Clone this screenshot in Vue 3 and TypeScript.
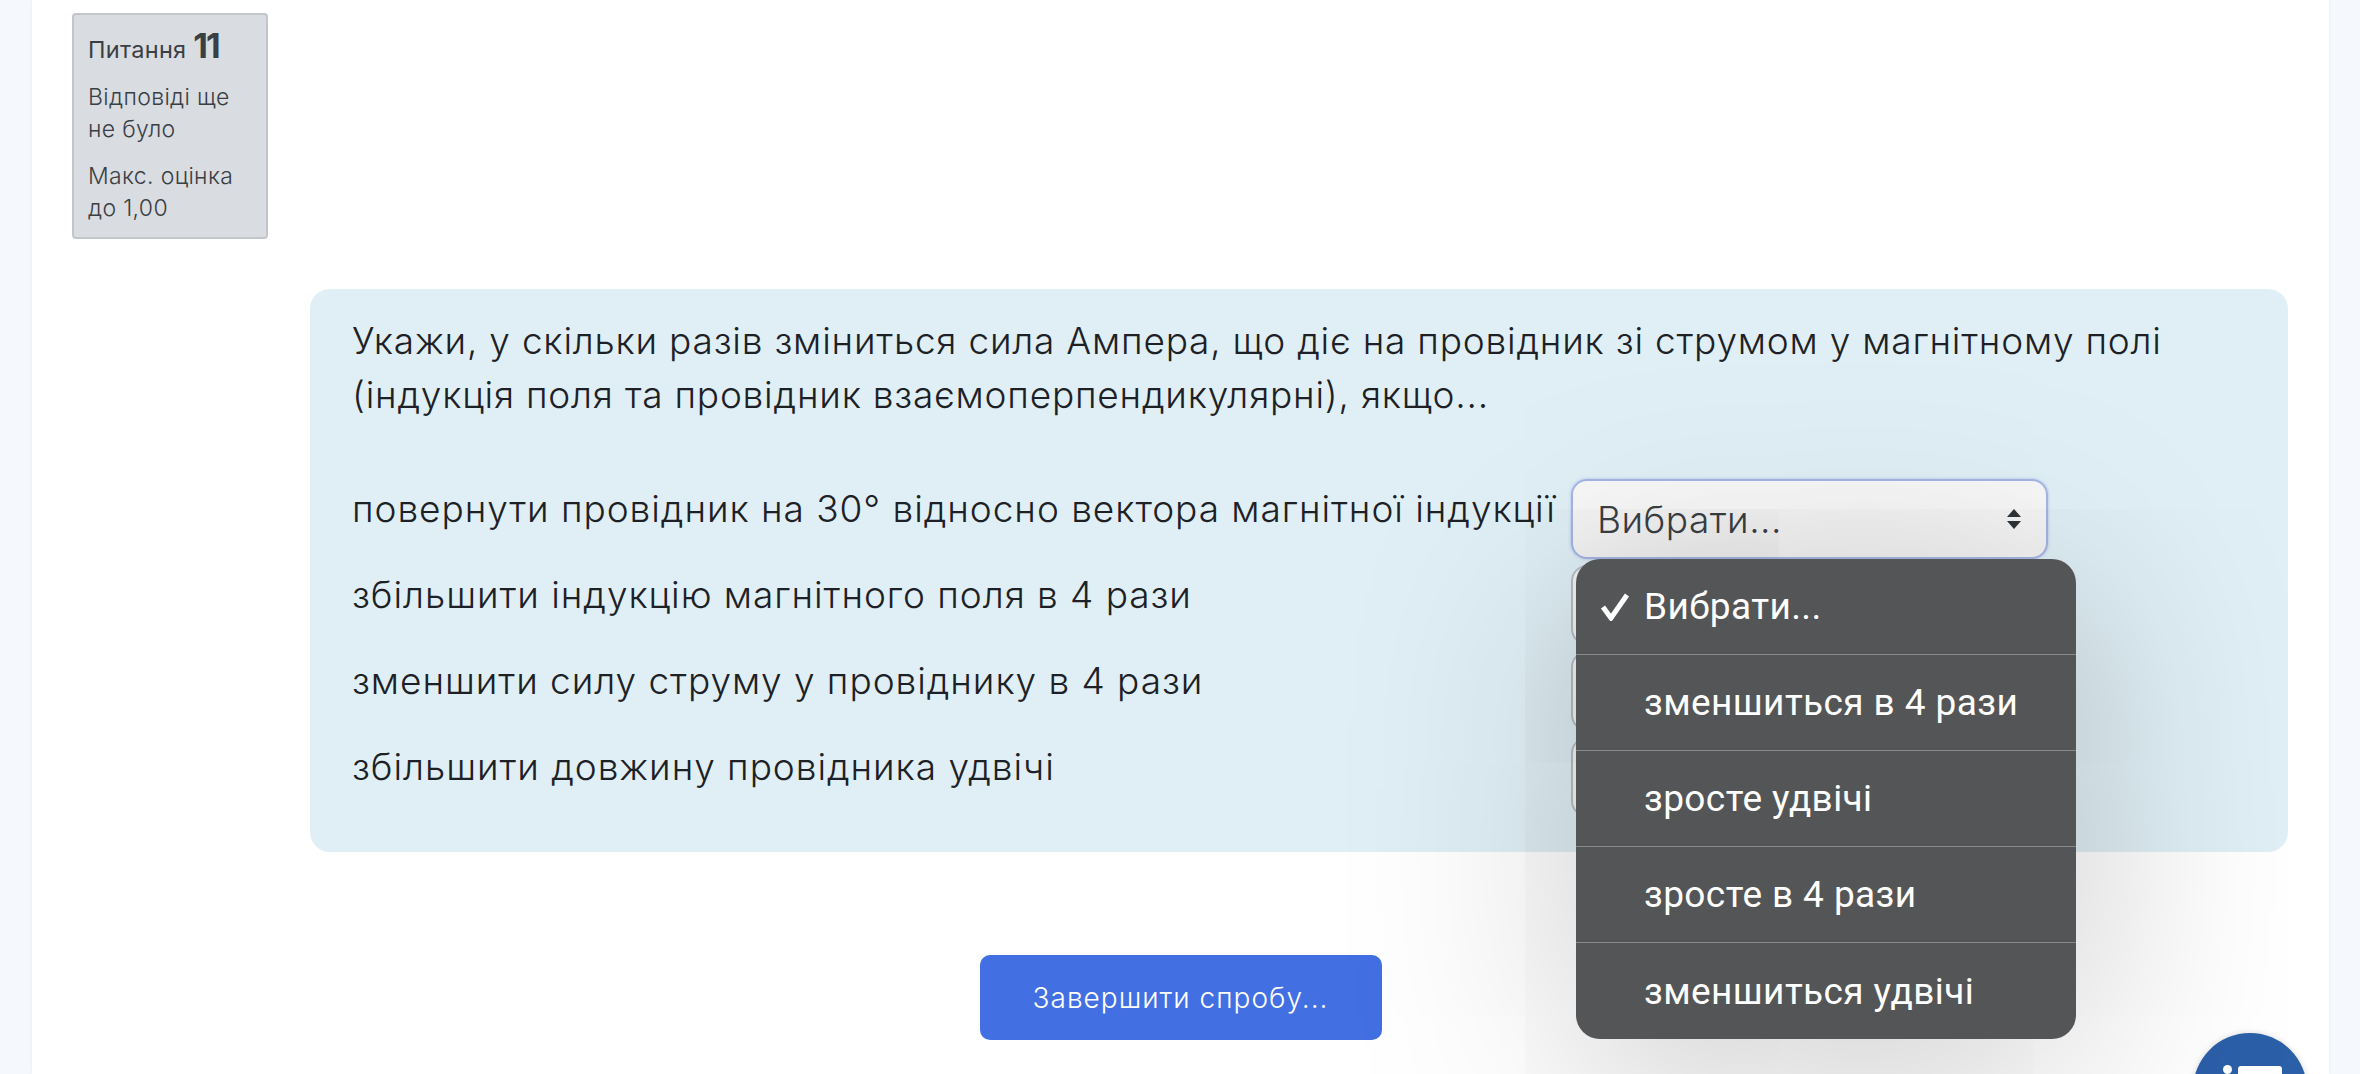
<template>
  <div class="page">
    <main class="sheet">
      <aside class="info">
        <h3 class="info-title">Питання <span class="qno">11</span></h3>
        <p class="info-line">Відповіді ще не було</p>
        <p class="info-line">Макс. оцінка до 1,00</p>
      </aside>

      <section class="question">
        <p class="prompt">
          Укажи, у скільки разів зміниться сила Ампера, що діє на провідник зі струмом у магнітному полі
          (індукція поля та провідник взаємоперпендикулярні), якщо...
        </p>
        <div class="answers">
          <template v-for="(row, i) in rows" :key="row">
            <div class="answer-text">{{ row }}</div>
            <div class="select-cell">
              <div :class="['fake-select', { focused: i === 0 }]">
                <!-- the lower selects are covered by the popup, only their edge shows -->
                <template v-if="i === 0">
                  <span>Вибрати...</span>
                  <svg class="arrows" width="16" height="20" viewBox="0 0 16 20">
                    <path d="M8 0 L15 8 H1 Z M1 12 H15 L8 20 Z" fill="#2f3236" />
                  </svg>
                </template>
              </div>
              <ul v-if="i === 0" class="popup">
                <li v-for="opt in options" :key="opt" class="popup-item">
                  <svg v-if="opt === options[0]" class="check" width="30" height="28" viewBox="0 0 30 28">
                    <path d="M3 14 L11 25 L27 2" fill="none" stroke="#fff" stroke-width="5" />
                  </svg>
                  {{ opt }}
                </li>
              </ul>
            </div>
          </template>
        </div>
      </section>

      <div class="actions">
        <button class="finish">Завершити спробу...</button>
      </div>
    </main>

    <div class="fab">
      <span class="fab-dot"></span>
      <span class="fab-bar"></span>
    </div>
  </div>
</template>

<script setup lang="ts">
const rows: string[] = [
  "повернути провідник на 30° відносно вектора магнітної індукції",
  "збільшити індукцію магнітного поля в 4 рази",
  "зменшити силу струму у провіднику в 4 рази",
  "збільшити довжину провідника удвічі",
];

const options: string[] = [
  "Вибрати...",
  "зменшиться в 4 рази",
  "зросте удвічі",
  "зросте в 4 рази",
  "зменшиться удвічі",
];
</script>

<style>
html,
body {
  margin: 0;
  overflow: hidden;
}
</style>

<style scoped>
.page {
  position: relative;
  height: 1074px;
  overflow: hidden;
  background: #f5f9fe;
  font-family: Inter, "Noto Sans", sans-serif;
  color: #1d2125;
}
.sheet {
  margin: 0 31px 0 32px;
  height: 1074px;
  box-sizing: border-box;
  padding: 13px 40px 0;
  background: #fff;
  box-shadow: 0 0 4px rgba(0, 0, 0, 0.06);
}
.info {
  box-sizing: border-box;
  width: 196px;
  height: 226px;
  padding: 11px 14px;
  background: #d9dce1;
  border: 2px solid #c2c5ca;
  border-radius: 4px;
  color: #3a3f44;
}
.info-title {
  margin: 0 0 11px;
  font-size: 23.5px;
  font-weight: 400;
  line-height: 40px;
  letter-spacing: 0.3px;
  white-space: nowrap;
}
.qno {
  font-size: 34px;
  font-weight: 700;
  letter-spacing: -2px;
}
.info-line {
  margin: 0 0 15px;
  font-size: 23px;
  font-weight: 300;
  line-height: 32px;
  letter-spacing: 0.35px;
}
.question {
  box-sizing: border-box;
  margin: 50px 0 0 238px;
  width: 1978px;
  height: 563px;
  padding: 25px 42px 0;
  background: #e0eff6;
  border-radius: 20px;
}
.prompt {
  margin: 0;
  width: 1840px;
  font-size: 37px;
  font-weight: 300;
  line-height: 54px;
  letter-spacing: 0.78px;
}
.answers {
  display: grid;
  grid-template-columns: 1205px 477px;
  column-gap: 14px;
  row-gap: 6px;
  margin-top: 57px;
}
.answer-text {
  padding-top: 3px;
  font-size: 37px;
  font-weight: 300;
  line-height: 54px;
  letter-spacing: 0.95px;
  white-space: nowrap;
}
.select-cell {
  position: relative;
}
.fake-select {
  box-sizing: border-box;
  display: flex;
  align-items: center;
  justify-content: space-between;
  height: 80px;
  padding: 0 24px 0 24px;
  background: #f4f4f4;
  border: 2px solid #b9bdc2;
  border-radius: 16px;
  font-size: 37px;
  font-weight: 300;
  letter-spacing: 0.5px;
  color: #3a3f44;
}
.fake-select.focused {
  background: linear-gradient(#f7f7f7, #f3f3f3);
  border-color: #a5b4e4;
  box-shadow: 0 0 3px rgba(110, 135, 220, 0.5);
}
.arrows {
  flex: none;
}
.popup {
  position: absolute;
  z-index: 5;
  top: 80px;
  left: 5px;
  width: 500px;
  margin: 0;
  padding: 0;
  list-style: none;
  background: #545556;
  border-radius: 24px;
  box-shadow: 0 30px 220px rgba(0, 0, 0, 0.25);
  color: #fff;
  font-family: Roboto, "Noto Sans", sans-serif;
  font-size: 37px;
  letter-spacing: 0.4px;
}
.popup-item {
  position: relative;
  box-sizing: border-box;
  display: flex;
  align-items: center;
  height: 96px;
  padding-left: 68px;
  border-bottom: 1px solid #8a8a8a;
}
.popup-item:last-child {
  border-bottom: 0;
}
.check {
  position: absolute;
  left: 24px;
  top: 34px;
}
.actions {
  display: flex;
  justify-content: center;
  margin-top: 103px;
}
.finish {
  width: 402px;
  height: 85px;
  border: 0;
  border-radius: 10px;
  background: #4270e3;
  color: #fff;
  font-family: Inter, "Noto Sans", sans-serif;
  font-size: 28px;
  font-weight: 300;
  letter-spacing: 1px;
}
.fab {
  position: absolute;
  left: 2193px;
  top: 1033px;
  width: 114px;
  height: 114px;
  border-radius: 50%;
  background: #2b5fa8;
  box-shadow: 0 0 6px rgba(0, 0, 0, 0.15);
}
.fab-dot {
  position: absolute;
  left: 30px;
  top: 32px;
  width: 9px;
  height: 9px;
  border-radius: 50%;
  background: #fff;
}
.fab-bar {
  position: absolute;
  left: 45px;
  top: 33px;
  width: 44px;
  height: 30px;
  border-radius: 3px;
  background: #fff;
}
</style>
